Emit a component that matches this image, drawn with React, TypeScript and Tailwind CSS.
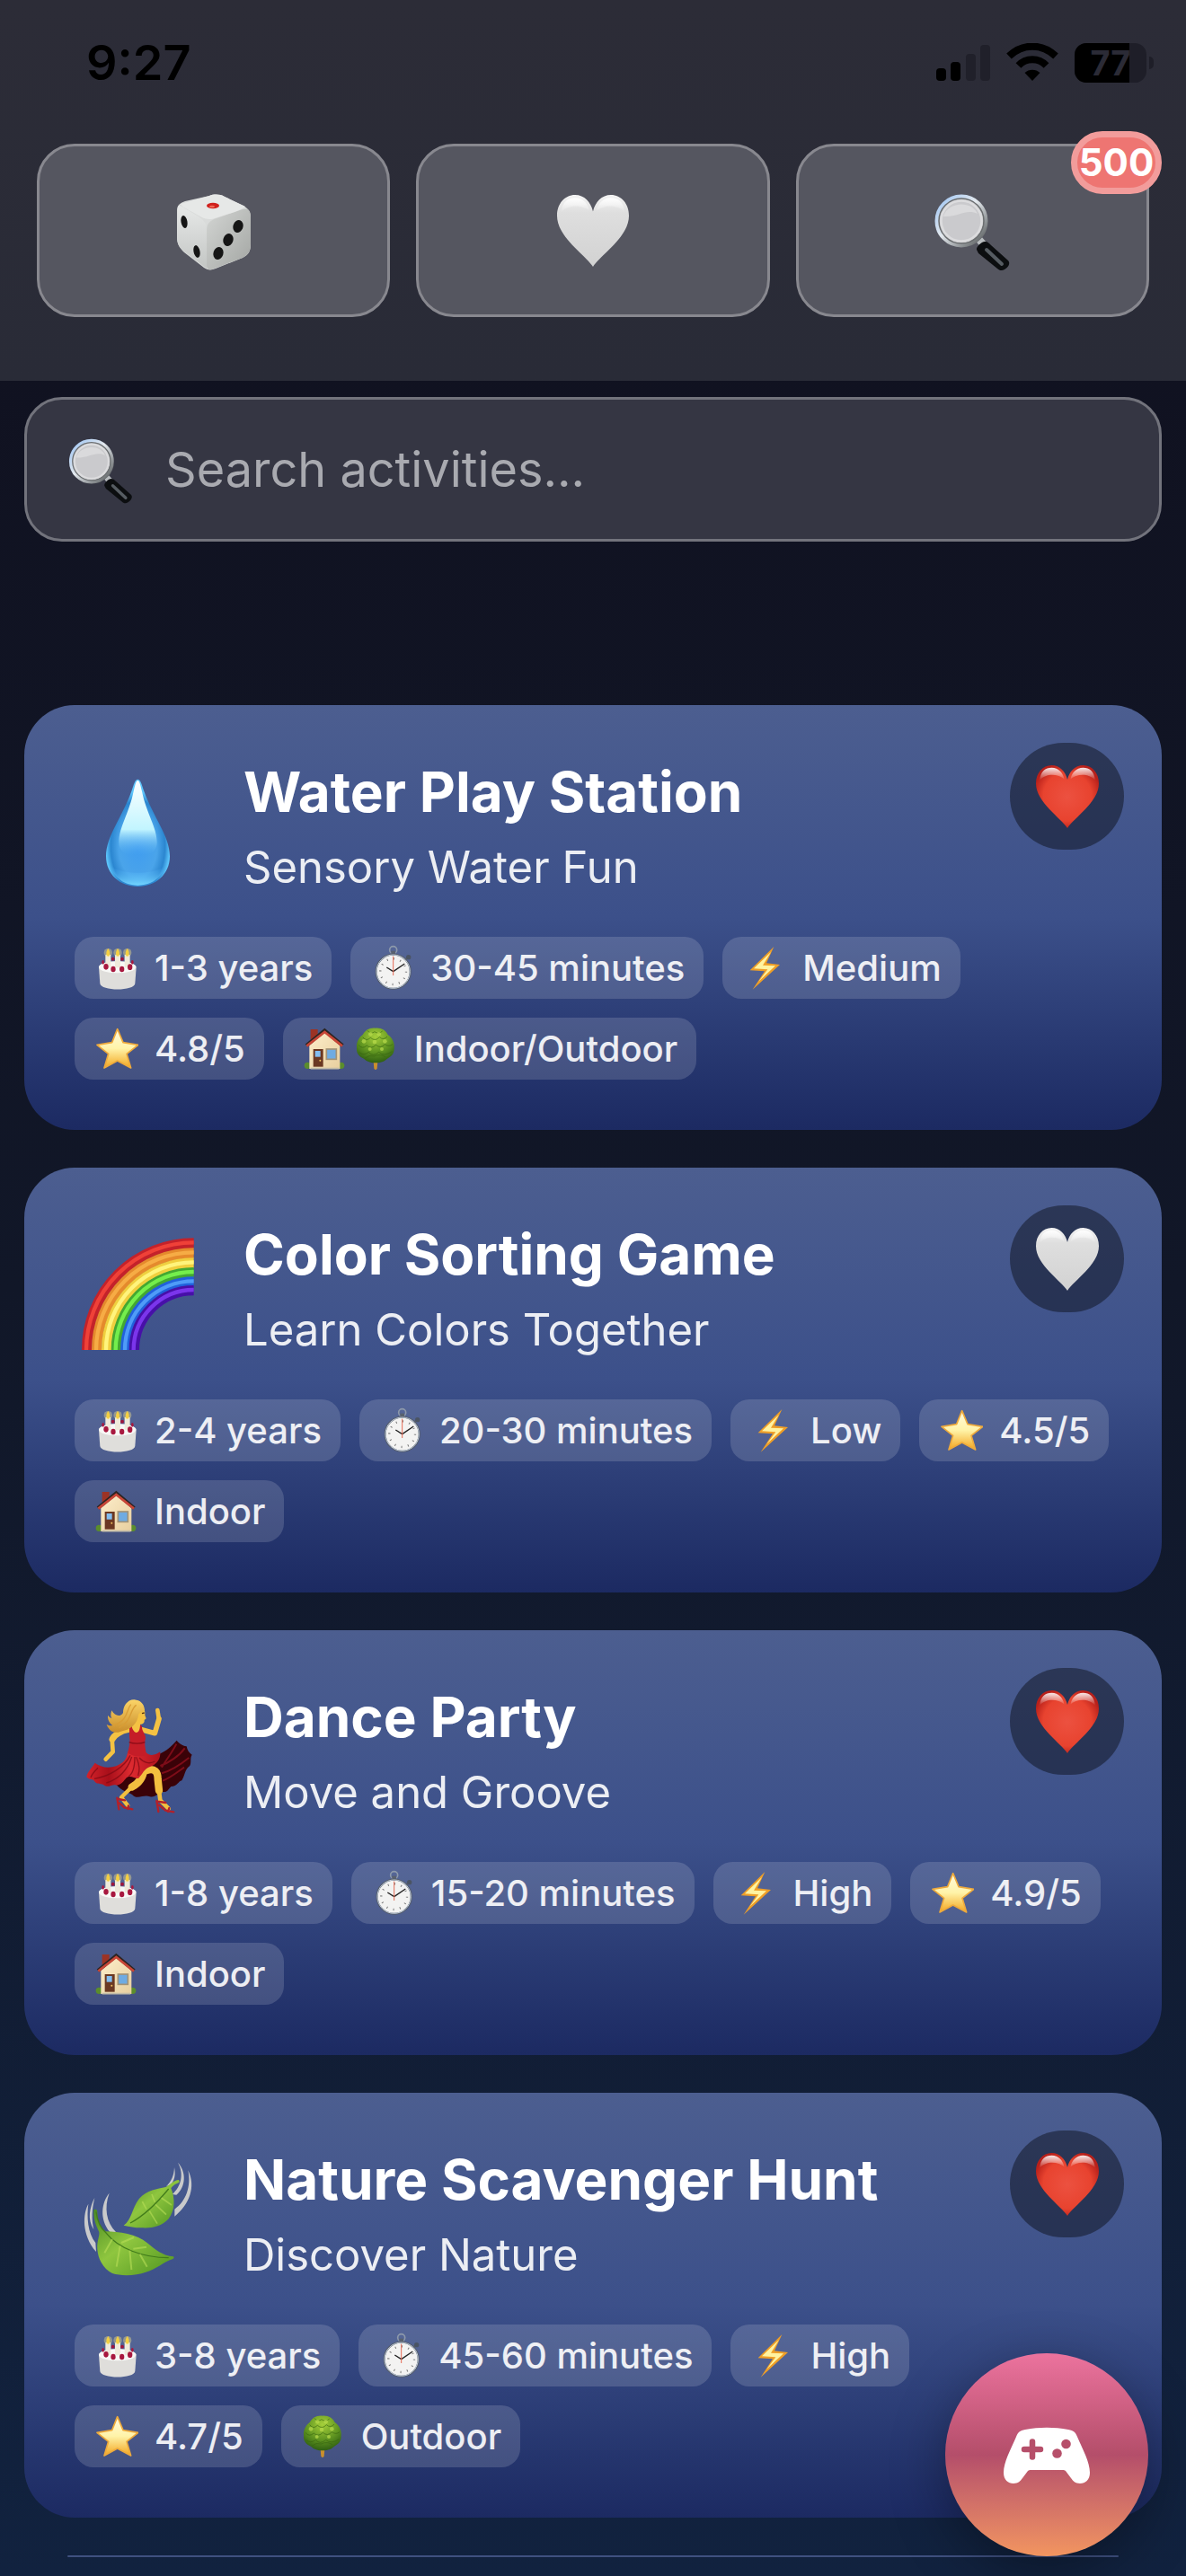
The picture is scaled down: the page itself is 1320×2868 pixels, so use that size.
import { useState } from 'react'
import type { ReactNode } from 'react'

type IconName = 'cake' | 'watch' | 'bolt' | 'star' | 'house' | 'tree'

type Activity = {
  title: string
  subtitle: string
  art: ReactNode
  liked: boolean
  tags: { icons: IconName[]; text: string }[]
}

// Shared gradients for every drawing on the page
function Gradients() {
  return (
    <svg className="absolute h-0 w-0" aria-hidden="true">
      <defs>
        <linearGradient id="white" x1="0" y1="0" x2="0" y2="1">
          <stop offset="0" stopColor="#f4f4f4" />
          <stop offset="0.25" stopColor="#dedede" />
          <stop offset="1" stopColor="#d2d2d2" />
        </linearGradient>
        <radialGradient id="red" cx="0.5" cy="0.5" r="0.55">
          <stop offset="0" stopColor="#ec5140" />
          <stop offset="0.7" stopColor="#e8432f" />
          <stop offset="1" stopColor="#b8201a" />
        </radialGradient>
        <linearGradient id="shine" x1="0" y1="0" x2="0" y2="1">
          <stop offset="0" stopColor="#fff" stopOpacity="0.9" />
          <stop offset="1" stopColor="#fff" stopOpacity="0" />
        </linearGradient>
        <linearGradient id="rim" x1="0" y1="0" x2="1" y2="1">
          <stop offset="0" stopColor="#9cc4f4" />
          <stop offset="0.45" stopColor="#e4e9ee" />
          <stop offset="1" stopColor="#4d5152" />
        </linearGradient>
        <linearGradient id="diceLeft" x1="0" y1="0" x2="0" y2="1">
          <stop offset="0" stopColor="#e6e8e7" />
          <stop offset="1" stopColor="#c3c6c4" />
        </linearGradient>
        <linearGradient id="diceRight" x1="0" y1="0" x2="1" y2="1">
          <stop offset="0" stopColor="#d3d5d3" />
          <stop offset="1" stopColor="#a3a6a3" />
        </linearGradient>
        <radialGradient id="drop" cx="0.5" cy="0.62" r="0.5">
          <stop offset="0" stopColor="#3f9cf0" />
          <stop offset="0.6" stopColor="#4aa4ea" />
          <stop offset="0.85" stopColor="#2b86d0" />
          <stop offset="1" stopColor="#5cc4fb" />
        </radialGradient>
        <linearGradient id="dropShine" x1="0" y1="0" x2="0" y2="1">
          <stop offset="0" stopColor="#fdffff" />
          <stop offset="0.65" stopColor="#c2f5ff" />
          <stop offset="1" stopColor="#4aa9f2" stopOpacity="0" />
        </linearGradient>
        <linearGradient id="dropGlow" x1="0" y1="0" x2="0" y2="1">
          <stop offset="0" stopColor="#4aa9f2" stopOpacity="0" />
          <stop offset="1" stopColor="#74d6ff" />
        </linearGradient>
        <linearGradient id="leaf" x1="0" y1="0" x2="1" y2="1">
          <stop offset="0" stopColor="#4a8a22" />
          <stop offset="0.45" stopColor="#8fc63f" />
          <stop offset="1" stopColor="#4f9420" />
        </linearGradient>
        <linearGradient id="skirt" x1="0" y1="0" x2="1" y2="0">
          <stop offset="0" stopColor="#d4232b" />
          <stop offset="0.3" stopColor="#a80f1a" />
          <stop offset="0.6" stopColor="#dd2a30" />
          <stop offset="1" stopColor="#b0121d" />
        </linearGradient>
        <linearGradient id="hair" x1="0" y1="0" x2="0" y2="1">
          <stop offset="0" stopColor="#fbd467" />
          <stop offset="1" stopColor="#c98d2b" />
        </linearGradient>
        <linearGradient id="gold" x1="0" y1="0" x2="0" y2="1">
          <stop offset="0" stopColor="#fffbe0" />
          <stop offset="0.5" stopColor="#fff3a8" />
          <stop offset="1" stopColor="#f3a61f" />
        </linearGradient>
        <radialGradient id="tree" cx="0.5" cy="0.25" r="0.75">
          <stop offset="0" stopColor="#a5cf3a" />
          <stop offset="0.6" stopColor="#5e9320" />
          <stop offset="1" stopColor="#2f5f12" />
        </radialGradient>
        <linearGradient id="wall" x1="0" y1="0" x2="1" y2="1">
          <stop offset="0" stopColor="#fdeecb" />
          <stop offset="1" stopColor="#e8cf9f" />
        </linearGradient>
      </defs>
    </svg>
  )
}

function Heart({ red, className }: { red?: boolean; className: string }) {
  return (
    <svg viewBox="0 0 100 100" className={className} aria-hidden="true">
      <path
        d="M50 100C40 84 0 59 0 29C0 12 11 0 25 0C38 0 47 10 50 23C53 10 62 0 75 0C89 0 100 12 100 29C100 59 60 84 50 100Z"
        fill={red ? 'url(#red)' : 'url(#white)'}
      />
      <path d="M6 24C7 10 15 4 25 4C36 4 43 12 45 22C36 14 16 12 6 24Z" fill="url(#shine)" />
      <path d="M94 24C93 10 85 4 75 4C64 4 57 12 55 22C64 14 84 12 94 24Z" fill="url(#shine)" />
    </svg>
  )
}

function Magnifier({ className }: { className: string }) {
  return (
    <svg viewBox="0 0 90 90" className={className} aria-hidden="true">
      <path d="M53 55l7 8" stroke="#b8bcbf" strokeWidth="8" />
      <path
        d="M50 66C49 63 56 56 60 57C62 57 64 59 66 61L85 78C88 81 85 86 81 88C78 90 75 89 73 87L52 70Z"
        fill="#0c0e10"
      />
      <path d="M61 66L78 82" stroke="#565c62" strokeWidth="4" strokeLinecap="round" />
      <circle cx="33" cy="34" r="27" fill="#cacacd" stroke="url(#rim)" strokeWidth="5" />
      <circle cx="33" cy="34" r="25" fill="none" stroke="#6b6e70" strokeWidth="1.5" />
      <circle cx="33" cy="34" r="22.5" fill="none" stroke="#dcdcde" strokeWidth="2.5" />
      <path d="M13 29C17 13 44 10 51 26C38 20 30 30 13 29Z" fill="#fff" opacity="0.3" />
    </svg>
  )
}

function Dice({ className }: { className: string }) {
  return (
    <svg viewBox="0 0 90 90" className={className} aria-hidden="true">
      <path
        d="M40 6C45 4 52 4 57 7L78 17C83 20 86 24 86 30V60C86 68 83 72 77 75L47 87C42 89 38 89 34 86L12 69C7 64 4 60 4 52V22C4 16 8 14 13 12Z"
        fill="#d9dbda"
      />
      <path d="M5 19C5 16 8 17 11 19L28 29C34 33 37 37 37 44V87L12 68C7 64 4 60 4 52Z" fill="url(#diceLeft)" />
      <path d="M37 44C37 37 41 33 48 31L77 21C83 19 86 22 86 29V60C86 68 83 72 77 75L43 88C40 89 37 88 37 84Z" fill="url(#diceRight)" />
      <path d="M8 15L40 6C45 4 52 4 57 7L80 18C78 20 73 22 68 24L46 31C42 33 34 32 30 29L10 18Z" fill="#e6e8e7" />
      <ellipse cx="44" cy="17" rx="7" ry="3.2" fill="#d0201d" />
      <ellipse cx="43" cy="18" rx="3" ry="1.2" fill="#ef6a58" />
      <g fill="#151515">
        <ellipse cx="12" cy="35" rx="3.5" ry="7" transform="rotate(-10 12 35)" />
        <ellipse cx="26" cy="68" rx="3.5" ry="7" transform="rotate(-12 26 68)" />
        <ellipse cx="72" cy="40" rx="5.5" ry="7" transform="rotate(18 72 40)" />
        <ellipse cx="61" cy="55" rx="5.5" ry="7" transform="rotate(18 61 55)" />
        <ellipse cx="50" cy="70" rx="5.5" ry="7" transform="rotate(18 50 70)" />
      </g>
    </svg>
  )
}

function DropArt() {
  return (
    <svg viewBox="0 0 420 480" className="h-[160px] w-[140px] shrink-0" aria-hidden="true">
      <path d="M211 80C202 80 198 96 190 120C160 205 105 270 105 337C105 398 152 438 211 438C270 438 318 398 318 337C318 270 262 205 232 120C224 96 220 80 211 80Z" fill="url(#drop)" />
      <path d="M211 84C205 84 202 100 197 120C182 195 148 240 148 290C148 325 175 335 211 335C247 335 275 325 275 290C275 240 240 195 225 120C220 100 217 84 211 84Z" fill="url(#dropShine)" />
      <path d="M118 370C165 400 258 400 305 370C285 420 245 434 211 434C177 434 138 420 118 370Z" fill="url(#dropGlow)" />
    </svg>
  )
}

const bands: [number, string, string][] = [
  [357, '#c4222a', '#ef4138'],
  [324, '#e58a2c', '#f6ac45'],
  [291, '#f0cf3e', '#fff47c'],
  [259, '#43a832', '#74ee4c'],
  [228, '#2161dc', '#4f9bf8'],
  [199, '#4710a8', '#7b35ec'],
]

function RainbowArt() {
  return (
    <svg viewBox="0 0 420 480" className="h-[160px] w-[140px] shrink-0" aria-hidden="true">
      {bands.map(([r, base, light]) => (
        <g key={r} fill="none">
          <path d={`M${398 - r} 441A${r} ${r} 0 0 1 398 ${441 - r}`} stroke={base} strokeWidth="34" />
          <path d={`M${396 - r} 441A${r + 2} ${r + 2} 0 0 1 398 ${439 - r}`} stroke={light} strokeWidth="13" />
        </g>
      ))}
    </svg>
  )
}

function DancerArt() {
  return (
    <svg viewBox="-6 0 420 480" className="h-[160px] w-[140px] shrink-0" aria-hidden="true">
      {/* far side of the skirt */}
      <path
        d="M230 250C265 258 300 240 335 200C345 212 352 216 368 220C370 232 376 242 386 248C378 260 386 274 378 286C362 296 362 320 352 334C340 336 338 354 316 354C306 364 304 374 290 372C272 374 264 392 246 388C226 380 210 396 192 386C178 372 152 374 132 346L200 290Z"
        fill="#3a0208"
      />
      <path d="M280 285C310 275 345 250 362 226M285 310C320 300 355 275 376 258M288 335C315 325 345 300 360 290M285 290C300 265 320 240 334 212" stroke="#7d0c18" strokeWidth="6" fill="none" />
      {/* legs */}
      <g fill="none" stroke="#f3bf3f" strokeLinecap="round" strokeLinejoin="round">
        <path d="M225 300C222 330 205 345 185 356" strokeWidth="25" />
        <path d="M185 356L150 390L172 418" strokeWidth="13" />
        <path d="M235 300C262 292 272 305 272 330L276 368" strokeWidth="25" />
        <path d="M276 368L280 400L308 428" strokeWidth="14" />
      </g>
      <g fill="none" stroke="#b3202a" strokeWidth="7" strokeLinecap="round">
        <path d="M136 392L142 430M140 396L162 400M142 408L160 424L187 430M174 418L172 429" />
        <path d="M268 402L274 438M270 404L298 408M276 416L298 434L325 439M310 426L306 438" />
      </g>
      {/* front of the skirt */}
      <path
        d="M176 228L232 240C246 254 262 250 280 238C282 262 268 282 246 288C226 294 222 312 208 326C196 330 188 318 172 322C158 330 158 346 134 350C122 344 110 358 96 352C84 340 72 350 62 338C52 326 44 334 34 322C36 304 54 290 62 275C84 292 124 300 158 270C170 258 168 244 176 228Z"
        fill="url(#skirt)"
      />
      <path d="M180 250C160 290 110 320 60 328M185 255C170 300 140 330 100 342M195 255C195 290 190 310 175 320M210 258C225 275 245 280 262 270M200 256C212 285 212 300 206 318M72 292C64 300 52 312 48 324" stroke="#800914" strokeWidth="4" fill="none" opacity="0.75" />
      {/* arms */}
      <g fill="none" stroke="#f5c243" strokeLinecap="round" strokeLinejoin="round">
        <path d="M172 164C150 168 126 182 120 196" strokeWidth="21" />
        <path d="M119 196L122 238L98 263" strokeWidth="14" />
        <path d="M218 164L262 176L276 128" strokeWidth="17" />
        <path d="M275 125L271 99" strokeWidth="14" />
        <path d="M199 140L200 165" strokeWidth="28" />
      </g>
      <path
        d="M177 154L184 150C190 180 212 184 213 148L219 152C218 172 232 176 231 194C226 208 230 224 234 248C214 256 190 254 172 242C178 214 180 204 177 190Z"
        fill="#c51d28"
      />
      <path d="M176 206C190 212 215 212 229 206" stroke="#8e0d18" strokeWidth="4" fill="none" />
      {/* head and hair */}
      <path d="M198 88C222 82 231 96 229 116L233 127L227 132C229 144 216 150 204 144Z" fill="#f5c243" />
      <path
        d="M193 64C168 64 156 88 156 108C146 124 128 118 118 100C114 112 114 118 118 127C112 124 108 120 105 116C104 130 110 142 121 150C114 152 108 150 101 147C108 168 128 180 148 170C178 166 204 148 208 112C216 104 222 104 228 98C226 78 214 66 193 64Z"
        fill="url(#hair)"
      />
      <path d="M200 82C178 96 186 138 142 158M182 80C166 100 174 132 124 150" stroke="#d99d35" strokeWidth="4" fill="none" />
      <path d="M219 110l8-2" stroke="#553517" strokeWidth="4" />
    </svg>
  )
}

function LeavesArt() {
  return (
    <svg viewBox="-6 -15 420 480" className="h-[160px] w-[140px] shrink-0" aria-hidden="true">
      <g fill="#c9cacb">
        <path d="M40 188C22 220 16 290 66 348L64 318C38 286 34 230 40 188Z" />
        <path d="M61 168C44 200 36 240 58 274C50 240 52 204 61 168Z" />
        <path d="M110 152C84 182 76 240 112 282L132 282C100 250 92 200 110 152Z" />
        <path d="M327 66C326 92 318 112 300 130L314 124C328 112 332 90 327 66Z" />
        <path d="M339 50C360 88 350 130 320 156L334 158C366 130 368 82 339 50Z" />
        <path d="M373 76C384 130 366 180 328 206L328 230C378 190 400 130 373 76Z" />
      </g>
      <path d="M158 260C186 240 184 204 210 170C236 142 270 138 298 132C312 126 326 108 342 108C346 114 344 118 336 120C326 124 320 130 316 136C330 170 330 210 308 238C282 266 250 270 216 268C194 268 178 264 158 260Z" fill="url(#leaf)" />
      <path d="M180 252C230 226 270 184 308 138" stroke="#427c1b" strokeWidth="4" fill="none" />
      <path d="M234 206l-14-26M262 182l-10-26M244 212l26 42M264 190l36 34M284 168l34 24" stroke="#b8de57" strokeWidth="5" fill="none" opacity="0.6" />
      <path d="M58 208C64 204 70 206 70 216C68 246 82 268 98 280C140 280 204 290 236 318C264 340 288 362 324 364C330 370 320 374 312 376C290 384 268 406 232 416C200 428 150 430 120 420C88 404 72 370 70 340C68 312 78 296 76 282C66 262 56 236 58 208Z" fill="url(#leaf)" />
      <path d="M66 214C70 250 84 272 100 286C140 336 220 368 308 368" stroke="#427c1b" strokeWidth="4" fill="none" />
      <path d="M120 306l-26 46M146 328l-12 70M178 344l6 64M212 356l24 42M150 318l42-18M190 338l44-6" stroke="#b8de57" strokeWidth="6" fill="none" opacity="0.6" />
    </svg>
  )
}

function TagIcon({ name }: { name: IconName }) {
  const cls = 'h-[60px] w-[50px] shrink-0'
  switch (name) {
    case 'cake':
      return (
        <svg viewBox="72 54 150 180" className={cls} aria-hidden="true">
          <circle cx="137" cy="113" r="6" fill="#a0163c" />
          <circle cx="168" cy="113" r="6" fill="#a0163c" />
          <path d="M90 140C90 118 215 118 215 140L211 195C209 221 96 221 94 195Z" fill="#dfdedb" />
          <ellipse cx="152" cy="140" rx="62" ry="20" fill="#f8f8f6" />
          {[121, 153, 185].map((x) => (
            <g key={x}>
              <rect x={x - 9} y="98" width="18" height="44" rx="3" fill="#efeadb" />
              <circle cx={x} cy="92" r="14" fill="#f8e58a" opacity="0.4" />
              <path d={`M${x} 78C${x + 8} 88 ${x + 8} 102 ${x} 104C${x - 8} 102 ${x - 8} 88 ${x} 78Z`} fill="#f4cf42" />
            </g>
          ))}
          {[[114, 139], [138, 147], [167, 147], [194, 140]].map(([x, y]) => (
            <ellipse key={x} cx={x} cy={y} rx="8" ry="10" fill="#a8183f" />
          ))}
          <ellipse cx="104" cy="124" rx="4" ry="7" fill="#a8183f" />
          <ellipse cx="202" cy="124" rx="4" ry="7" fill="#a8183f" />
        </svg>
      )
    case 'watch':
      return (
        <svg viewBox="999 54 150 180" className={cls} aria-hidden="true">
          <circle cx="1079" cy="83" r="12" fill="none" stroke="#8d99ab" strokeWidth="5" />
          <rect x="1072" y="86" width="14" height="12" fill="#59616e" />
          <path d="M1112 120l18-13" stroke="#59616e" strokeWidth="7" />
          <circle cx="1130" cy="107" r="8" fill="#4a5464" />
          <circle cx="1079" cy="155" r="57" fill="#f3f3f2" stroke="#565d68" strokeWidth="6" />
          <circle cx="1079" cy="155" r="56" fill="none" stroke="#c1cede" strokeWidth="3" />
          <circle cx="1079" cy="155" r="43" fill="none" stroke="#777" strokeWidth="7" strokeDasharray="3 19.5" />
          <path d="M1079 155L1117 129M1079 155L1057 141" stroke="#222" strokeWidth="4" />
          <path d="M1079 104V168" stroke="#e56b56" strokeWidth="3" />
        </svg>
      )
    case 'bolt':
      return (
        <svg viewBox="0 0 150 180" className={cls} aria-hidden="true">
          <path d="M109 18L29 97L78 100L38 161L129 78L84 73Z" fill="#ef9f27" />
          <path d="M99 36L42 91L88 94L58 134L114 82L72 80Z" fill="#fff3a0" />
        </svg>
      )
    case 'star':
      return (
        <svg viewBox="72 324 150 180" className={cls} aria-hidden="true">
          <path
            d="M152 347L171 392L221 400L183 430L197 477L152 453L108 477L122 430L84 400L134 392Z"
            fill="url(#gold)"
            stroke="#eeaa3c"
            strokeWidth="5"
            strokeLinejoin="round"
          />
        </svg>
      )
    case 'house':
      return (
        <svg viewBox="771 324 150 180" className={cls} aria-hidden="true">
          <path d="M800 348h24v26l-24 22Z" fill="#9c3325" />
          <circle cx="790" cy="469" r="11" fill="#5b8d2c" />
          <circle cx="902" cy="469" r="11" fill="#5b8d2c" />
          <path d="M796 402L847 356L898 402V480H796Z" fill="url(#wall)" />
          <path d="M786 402L847 352L907 402" fill="none" stroke="#2c2422" strokeWidth="12" />
          <path d="M787 404L847 357L906 404" fill="none" stroke="#c84637" strokeWidth="8" />
          <rect x="809" y="414" width="33" height="59" fill="#6b3822" />
          <rect x="815" y="420" width="18" height="20" fill="#83bdf0" />
          <circle cx="832" cy="452" r="3" fill="#f0c060" />
          <rect x="853" y="414" width="33" height="34" fill="#6fabe2" stroke="#a39377" strokeWidth="5" />
          <path d="M800 479h95" stroke="#c4bda9" strokeWidth="5" />
        </svg>
      )
    case 'tree':
      return (
        <svg viewBox="942 324 150 180" className={cls} aria-hidden="true">
          <path d="M1009 445h16l-3 34q-5 8-10 0Z" fill="#c98f2e" />
          <path
            d="M1016 344C1036 342 1052 352 1058 366C1072 374 1082 394 1079 412C1080 430 1068 440 1056 446C1044 458 1028 460 1016 460C1002 460 988 456 978 446C962 440 952 428 954 408C952 392 962 374 974 366C982 352 996 342 1016 344Z"
            fill="url(#tree)"
          />
          <g fill="none" stroke="#35620f" strokeWidth="3" opacity="0.6">
            <path d="M974 374q12 16 26 2q16 14 30-2q14 12 26-2M960 400q12 16 28 2q14 14 30-2q16 14 30-2q14 10 26 0M962 424q14 14 32 0q14 18 34 0q18 16 44-2M990 352q10 14 24 4q12 10 26-2M982 444q14-12 30-6q20-10 38 2" />
          </g>
          <g fill="#b9dc4c" opacity="0.7">
            <circle cx="1000" cy="364" r="7" />
            <circle cx="1028" cy="364" r="7" />
            <circle cx="978" cy="388" r="7" />
            <circle cx="1014" cy="390" r="7" />
            <circle cx="1048" cy="388" r="7" />
            <circle cx="998" cy="414" r="6" />
            <circle cx="1038" cy="414" r="6" />
          </g>
        </svg>
      )
  }
}

const activities: Activity[] = [
  {
    title: 'Water Play Station',
    subtitle: 'Sensory Water Fun',
    art: <DropArt />,
    liked: true,
    tags: [
      { icons: ['cake'], text: '1-3 years' },
      { icons: ['watch'], text: '30-45 minutes' },
      { icons: ['bolt'], text: 'Medium' },
      { icons: ['star'], text: '4.8/5' },
      { icons: ['house', 'tree'], text: 'Indoor/Outdoor' },
    ],
  },
  {
    title: 'Color Sorting Game',
    subtitle: 'Learn Colors Together',
    art: <RainbowArt />,
    liked: false,
    tags: [
      { icons: ['cake'], text: '2-4 years' },
      { icons: ['watch'], text: '20-30 minutes' },
      { icons: ['bolt'], text: 'Low' },
      { icons: ['star'], text: '4.5/5' },
      { icons: ['house'], text: 'Indoor' },
    ],
  },
  {
    title: 'Dance Party',
    subtitle: 'Move and Groove',
    art: <DancerArt />,
    liked: true,
    tags: [
      { icons: ['cake'], text: '1-8 years' },
      { icons: ['watch'], text: '15-20 minutes' },
      { icons: ['bolt'], text: 'High' },
      { icons: ['star'], text: '4.9/5' },
      { icons: ['house'], text: 'Indoor' },
    ],
  },
  {
    title: 'Nature Scavenger Hunt',
    subtitle: 'Discover Nature',
    art: <LeavesArt />,
    liked: true,
    tags: [
      { icons: ['cake'], text: '3-8 years' },
      { icons: ['watch'], text: '45-60 minutes' },
      { icons: ['bolt'], text: 'High' },
      { icons: ['star'], text: '4.7/5' },
      { icons: ['tree'], text: 'Outdoor' },
    ],
  },
]

function ActivityCard({ activity }: { activity: Activity }) {
  const [liked, setLiked] = useState(activity.liked)

  return (
    <article className="relative rounded-[56px] bg-linear-to-b from-[#4c5e90] via-[#3c508a] to-[#1c2a62] p-14">
      <div className="flex h-[160px] gap-12">
        {activity.art}
        <div className="min-w-0">
          <h2 className="text-[62px] leading-[82px] font-bold text-white">{activity.title}</h2>
          <p className="mt-3 text-[49px] leading-[62px] text-white/90">{activity.subtitle}</p>
        </div>
      </div>
      <ul className="mt-[42px] flex flex-wrap gap-[21px]">
        {activity.tags.map((tag) => (
          <li
            key={tag.text}
            className="flex h-[69px] items-center rounded-[21px] bg-white/15 px-[21px] text-[40px] font-medium whitespace-nowrap text-white/90"
          >
            <span className="mr-[18px] flex gap-[7px]">
              {tag.icons.map((icon) => (
                <TagIcon key={icon} name={icon} />
              ))}
            </span>
            {tag.text}
          </li>
        ))}
      </ul>
      <button
        type="button"
        aria-pressed={liked}
        aria-label={`Favorite ${activity.title}`}
        onClick={() => setLiked(!liked)}
        className="absolute top-[42px] right-[42px] flex h-[119px] w-[127px] items-center justify-center rounded-full bg-black/40"
      >
        <Heart red={liked} className="h-[70px] w-[70px]" />
      </button>
    </article>
  )
}

function StatusBar() {
  return (
    <div className="flex h-[60px] items-center justify-between pr-9 pl-24 text-black">
      <span className="text-[54px] leading-[60px] font-semibold">9:27</span>
      <div className="flex items-center gap-[18px]">
        <svg viewBox="0 0 60 44" className="h-[44px] w-[60px]" aria-hidden="true">
          <rect x="0" y="28" width="11" height="14" rx="4" />
          <rect x="16" y="21" width="11" height="21" rx="4" />
          <rect x="33" y="12" width="11" height="30" rx="4" fill="#20202a" />
          <rect x="49" y="2" width="11" height="40" rx="4" fill="#20202a" />
        </svg>
        <svg viewBox="0 0 58 44" className="h-[44px] w-[58px]" aria-hidden="true">
          <path d="M29 42L20.5 33C25 28.5 33 28.5 37.5 33Z" strokeLinejoin="round" />
          <path d="M13.500 25C22 16 36 16 44.500 25" fill="none" stroke="#000" strokeWidth="8" />
          <path d="M3 14.500C18 0 40 0 55 14.500" fill="none" stroke="#000" strokeWidth="8" />
        </svg>
        <div className="flex items-center gap-[3px]">
          <div className="relative flex h-[44px] w-[80px] items-center justify-center overflow-hidden rounded-[13px] bg-[#1e1e28]">
            <div className="absolute inset-y-0 left-0 w-[61px] bg-black" />
            <span className="relative text-[38px] leading-[44px] font-bold text-[#2b2b36]">77</span>
          </div>
          <div className="h-[14px] w-[5px] rounded-r-full bg-[#1e1e28]" />
        </div>
      </div>
    </div>
  )
}

export default function App() {
  const [query, setQuery] = useState('')
  const navButton =
    'relative flex h-[193px] flex-1 items-center justify-center rounded-[42px] border-[3px] border-[#88888f] bg-[#555660]'

  return (
    <div className="min-h-screen bg-linear-to-b from-[#10101e] via-[#111728] to-[#11223f] font-['Inter','Liberation_Sans',sans-serif]">
      <Gradients />
      <header className="bg-linear-to-b from-[#2c2c37] to-[#292b37] pt-10 pb-[71px]">
        <StatusBar />
        <nav className="mt-[60px] flex gap-[29px] px-[41px]" aria-label="Main">
          <button type="button" aria-label="Random activity" className={navButton}>
            <Dice className="h-[90px] w-[90px]" />
          </button>
          <button type="button" aria-label="Favorites" className={navButton}>
            <Heart className="h-[80px] w-[80px]" />
          </button>
          <button type="button" aria-label="Search, 500 activities" className={navButton}>
            <Magnifier className="h-[90px] w-[90px]" />
            <span className="absolute -top-[17px] -right-[17px] flex h-[70px] w-[101px] items-center justify-center rounded-[35px] border-[7px] border-[#f29c9b] bg-[#ee7572] text-[42px] leading-none font-bold text-white">
              500
            </span>
          </button>
        </nav>
      </header>

      <main className="px-[27px] pt-[18px] pb-5">
        <label className="flex h-[161px] items-center gap-[34px] rounded-[42px] border-[3px] border-[#72737c] bg-[#353643] pr-10 pl-[44px]">
          <Magnifier className="h-[76px] w-[76px] shrink-0" />
          <input
            type="search"
            aria-label="Search activities"
            placeholder="Search activities..."
            value={query}
            onChange={(e) => setQuery(e.target.value)}
            className="min-w-0 flex-1 bg-transparent text-[54px] leading-[70px] text-white outline-none placeholder:text-[#a9aab0]"
          />
        </label>

        <div className="mt-[182px] flex flex-col gap-[42px]">
          {activities.map((activity) => (
            <ActivityCard key={activity.title} activity={activity} />
          ))}
          <div className="mx-12 h-[2px] rounded-full bg-[#3f5080]" />
        </div>
      </main>

      <button
        type="button"
        aria-label="Play games"
        className="fixed right-[42px] bottom-[22px] flex h-[226px] w-[226px] items-center justify-center rounded-full bg-linear-to-b from-[#ec739e] via-[#b44e6a] to-[#f2955f] shadow-[0_16px_60px_rgba(0,0,0,0.35)]"
      >
        <svg viewBox="0 0 100 85" className="h-[85px] w-[100px]" aria-hidden="true">
          <path
            d="M16 22C18 17 20 15 26 14C42 11 58 11 74 14C80 15 82 17 84 22C90 36 98 50 98 62C98 70 93 74 87 74C82 74 79 71 77 68L71 60C70 59 69 59 68 59H32C31 59 30 59 29 60L23 68C21 71 18 74 13 74C7 74 2 70 2 62C2 50 10 36 16 22Z"
            fill="#fff"
          />
          <path d="M25 36H43M34 27.5V44.5" stroke="#b64f6a" strokeWidth="6.5" strokeLinecap="round" />
          <circle cx="61.5" cy="40.5" r="5.3" fill="#b64f6a" />
          <circle cx="71.5" cy="30" r="5.3" fill="#b64f6a" />
        </svg>
      </button>
    </div>
  )
}
